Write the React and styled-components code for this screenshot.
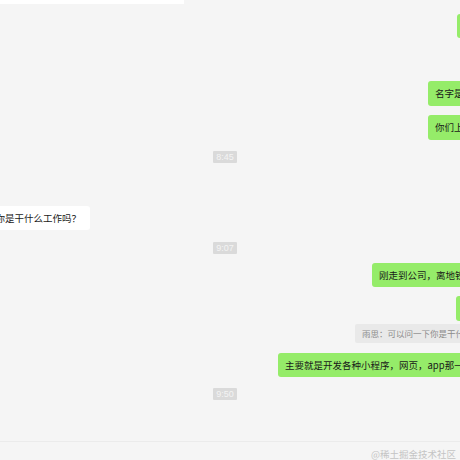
import React from 'react';
import styled, { createGlobalStyle } from 'styled-components';

const GlobalStyle = createGlobalStyle`
  html, body {
    margin: 0;
    padding: 0;
    background: #f5f5f5;
  }
  body {
    font-family: "Noto Sans CJK SC", "Noto Sans", sans-serif;
  }
`;

const Page = styled.div`
  width: 460px;
  height: 460px;
  display: flex;
  flex-direction: column;
  overflow: hidden;
  background: #f5f5f5;
`;

const TopStrip = styled.div`
  width: 184px;
  height: 4px;
  flex-shrink: 0;
  background: #ffffff;
`;

const Messages = styled.div`
  display: flex;
  flex-direction: column;
  padding-right: 10px;
  flex-shrink: 0;
`;

const Row = styled.div`
  display: flex;
  justify-content: ${p => (p.$center ? 'center' : 'flex-start')};
  margin-top: ${p => p.$top}px;
`;

const Bubble = styled.div`
  flex-shrink: 0;
  margin-left: ${p => p.$x}px;
  height: ${p => p.$h || 24}px;
  line-height: ${p => p.$h || 24}px;
  padding: 0 9px 0 7px;
  border-radius: 3px;
  font-size: 9.5px;
  color: #191919;
  white-space: nowrap;
  background: ${p => (p.$mine ? '#95ec69' : '#ffffff')};
`;

const Quote = styled.div`
  flex-shrink: 0;
  margin-left: ${p => p.$x}px;
  height: 19px;
  line-height: 19px;
  padding: 0 7px;
  border-radius: 2px;
  font-size: 8.5px;
  color: #8c8c8c;
  white-space: nowrap;
  background: #e9e9e9;
`;

const Time = styled.div`
  width: 24px;
  height: 12px;
  line-height: 12px;
  text-align: center;
  font-family: "Liberation Sans", Arial, sans-serif;
  font-size: 9px;
  color: #f4f4f4;
  background: #dadada;
  border-radius: 1px;
`;

const Footer = styled.div`
  margin-top: 41px;
  border-top: 1px solid #ebebeb;
  display: flex;
  justify-content: flex-end;
  padding: 5px 4px 0 0;
  font-size: 9.5px;
  color: #c4c4c4;
  line-height: 14px;
  white-space: nowrap;
`;

const App = () => {
  return (
    <Page>
      <GlobalStyle />
      <TopStrip />
      <Messages>
        <Row $top={10}>
          <Bubble $mine $x={457}>好的好的</Bubble>
        </Row>
        <Row $top={43}>
          <Bubble $mine $x={428} $h={25}>名字是雨思</Bubble>
        </Row>
        <Row $top={9}>
          <Bubble $mine $x={428} $h={25}>你们上班都是几点呀？</Bubble>
        </Row>
        <Row $top={11} $center>
          <Time>8:45</Time>
        </Row>
        <Row $top={43}>
          <Bubble $x={-59}>可以问一下你是干什么工作吗？</Bubble>
        </Row>
        <Row $top={12} $center>
          <Time>9:07</Time>
        </Row>
        <Row $top={9}>
          <Bubble $mine $x={372}>刚走到公司，离地铁站不远</Bubble>
        </Row>
        <Row $top={9}>
          <Bubble $mine $x={456} $h={25}>嗯嗯</Bubble>
        </Row>
        <Row $top={3}>
          <Quote $x={355}>雨思：可以问一下你是干什么工作吗？</Quote>
        </Row>
        <Row $top={10}>
          <Bubble $mine $x={278}>主要就是开发各种小程序，网页，app那一类的</Bubble>
        </Row>
        <Row $top={11} $center>
          <Time>9:50</Time>
        </Row>
      </Messages>
      <Footer>@稀土掘金技术社区</Footer>
    </Page>
  );
};

export default App;
